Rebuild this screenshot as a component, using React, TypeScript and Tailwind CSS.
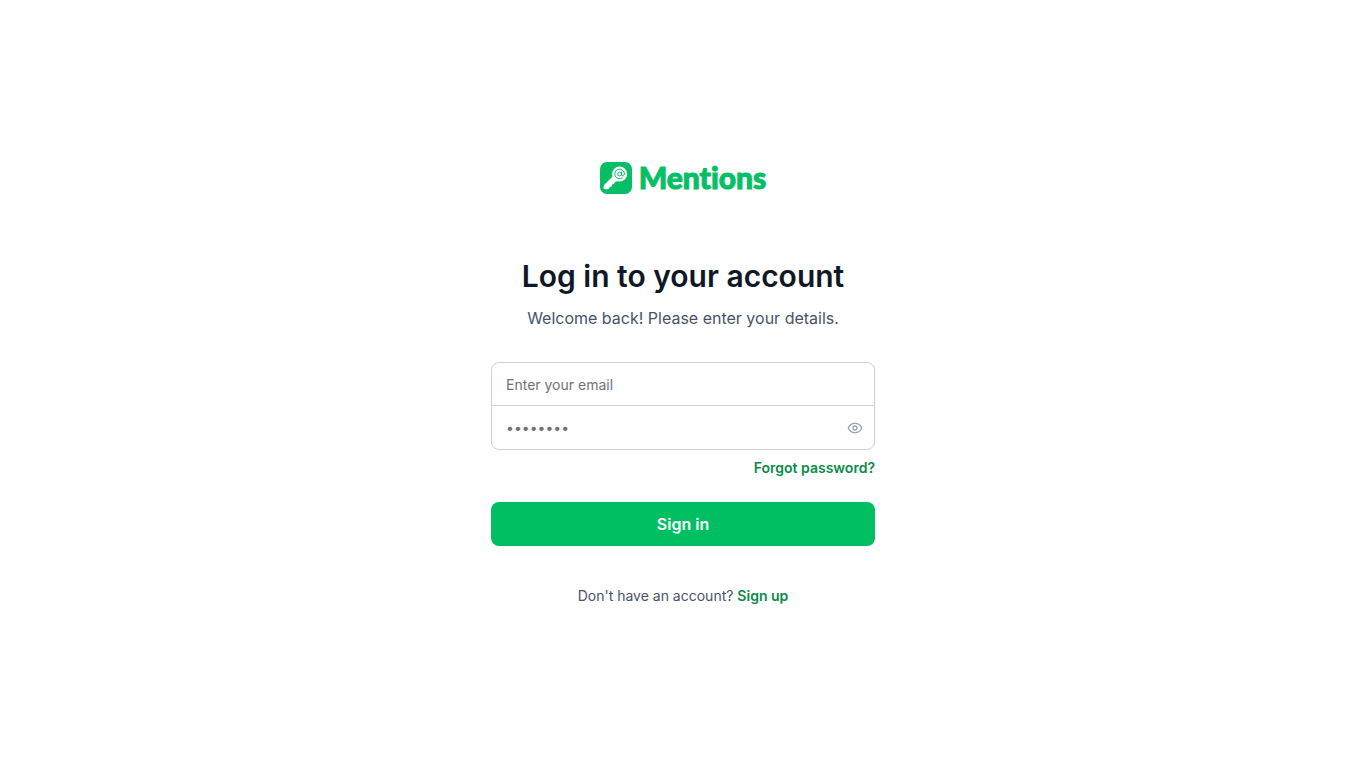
import { useState } from "react";

function Logo() {
  return (
    <div className="flex items-start gap-[7px] text-[#06bf64]">
      <svg viewBox="0 0 32 32" className="size-8" aria-hidden="true">
        <rect width="32" height="32" rx="7" fill="currentColor" />
        <path
          d="M13.8 13.800 4.800 22.800Q3.600 24.200 4 26.400Q6.400 27.600 8.600 26.500L9 24.900 11.200 24.300 11.800 22 14 21.400 14.600 19.400 18.500 18.500Z"
          fill="white"
          stroke="white"
          strokeWidth="1"
          strokeLinejoin="round"
        />
        <circle cx="19.600" cy="12" r="7.600" fill="white" />
        <circle cx="19.600" cy="12" r="1.900" stroke="currentColor" strokeWidth="1" fill="none" />
        <path
          d="M21.500 10.100v2.500c0 1.800 2.900 1.600 2.900-.6a4.800 4.800 0 1 0-2.200 4"
          stroke="currentColor"
          strokeWidth="1"
          strokeLinecap="round"
          fill="none"
        />
      </svg>
      <span className="font-['Lato',sans-serif] text-[30px] leading-[30px] font-black [-webkit-text-stroke:1px_currentColor] [font-variant-ligatures:none]">
        Mentions
      </span>
    </div>
  );
}

export default function App() {
  const [visible, setVisible] = useState(false);

  return (
    <main className="flex min-h-screen items-center justify-center bg-white px-4 font-['Inter',sans-serif]">
      <div className="flex w-full max-w-96 flex-col">
        <header className="flex flex-col items-center text-center">
          <Logo />
          <h1 className="mt-16 text-3xl leading-9 font-semibold text-[#101828]">Log in to your account</h1>
          <p className="mt-3 text-base text-[#475467]">Welcome back! Please enter your details.</p>
        </header>

        <form className="mt-8 flex flex-col" onSubmit={(e) => e.preventDefault()}>
          <div className="divide-y divide-[#d0d0d4] rounded-lg border border-[#d0d0d4]">
            <input
              type="email"
              aria-label="Email"
              placeholder="Enter your email"
              className="block h-[43px] w-full rounded-t-lg px-[14px] text-sm text-[#101828] placeholder:text-[#71717a]"
            />
            <div className="flex h-[43px] items-center pr-[11px]">
              <input
                type={visible ? "text" : "password"}
                aria-label="Password"
                placeholder="••••••••"
                className="h-full min-w-0 flex-1 rounded-b-lg px-[14px] text-sm text-[#101828] placeholder:text-[#71717a]"
              />
              <button
                type="button"
                aria-label={visible ? "Hide password" : "Show password"}
                onClick={() => setVisible(!visible)}
                className="text-[#98a2b3]"
              >
                <svg viewBox="0 0 16 16" className="size-4" fill="none" stroke="currentColor" strokeWidth="1.300">
                  <path d="M1.300 8C2.500 5 5 3.300 8 3.300S13.500 5 14.700 8C13.500 11 11 12.700 8 12.700S2.500 11 1.300 8Z" />
                  <circle cx="8" cy="8" r="2" />
                </svg>
              </button>
            </div>
          </div>
          <a href="#forgot" className="mt-2 self-end text-sm font-semibold text-[#0b8a47]">
            Forgot password?
          </a>
          <button type="submit" className="mt-6 h-11 rounded-lg bg-[#00bf63] text-base font-semibold text-white">
            Sign in
          </button>
        </form>

        <p className="mt-10 text-center text-sm text-[#475467]">
          Don't have an account?{" "}
          <a href="#signup" className="font-semibold text-[#0b8a47]">
            Sign up
          </a>
        </p>
      </div>
    </main>
  );
}
